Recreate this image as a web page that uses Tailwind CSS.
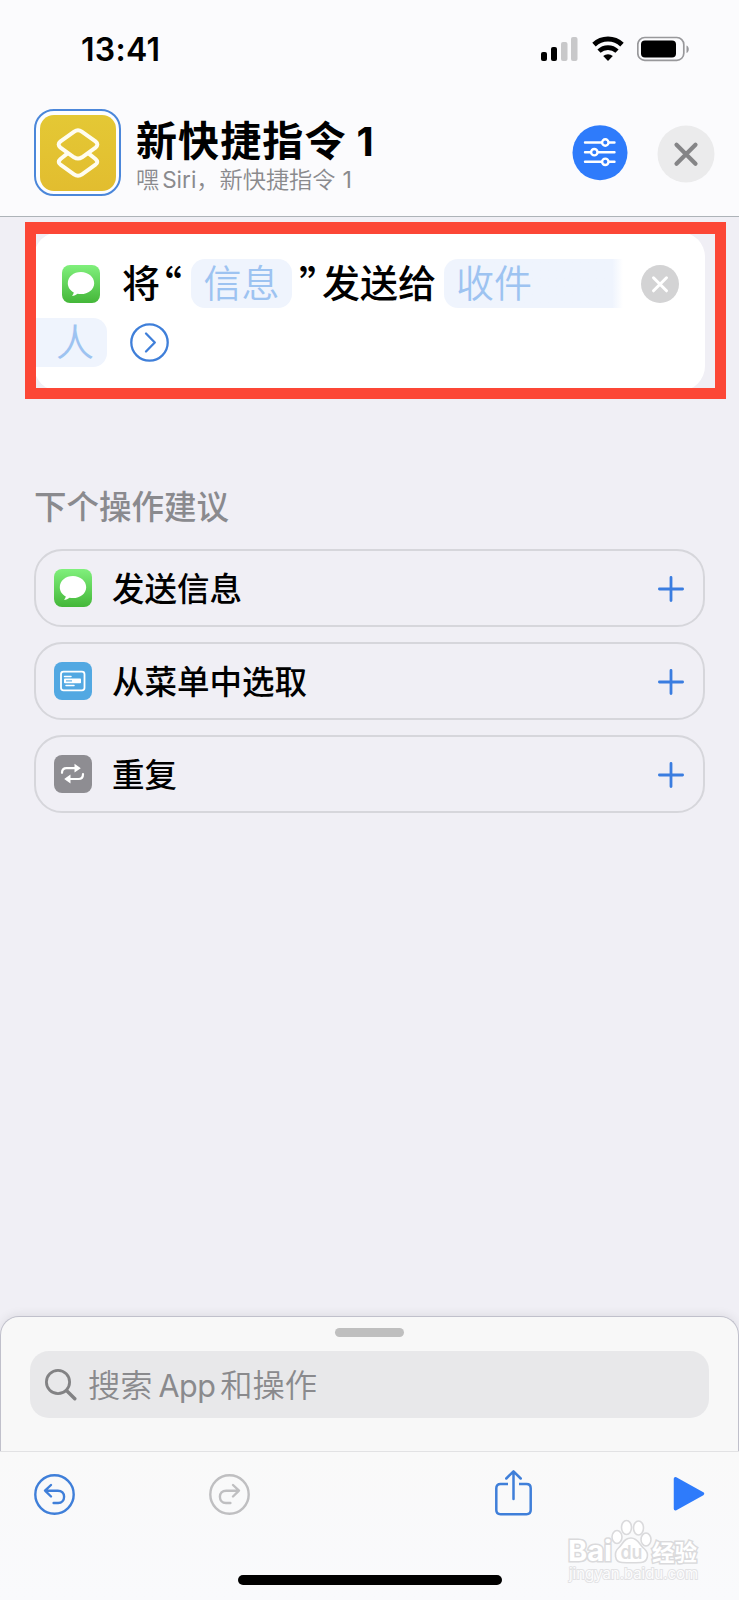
<!DOCTYPE html>
<html lang="zh-CN">
<head>
<meta charset="utf-8">
<title>新快捷指令 1</title>
<script src="https://cdn.jsdelivr.net/npm/@tailwindcss/browser@4"></script>
</head>
<body class="font-[Inter,'Noto_Sans_CJK_SC',sans-serif]">
<svg class="absolute size-0">
  <defs>
    <linearGradient id="green" x1="0" y1="0" x2="0" y2="1"><stop offset="0" stop-color="#80f07c"/><stop offset="1" stop-color="#44b739"/></linearGradient>
    <symbol id="msg" viewBox="0 0 38 38">
      <rect width="38" height="38" rx="8" fill="url(#green)"/>
      <path d="M19 7C11.600 7 5.800 11.800 5.800 18.200c0 4 2.400 7.400 6 9.300-.2 1.200-.8 2.400-1.800 3.300 2.200-.1 4.100-.9 5.500-2.100 1.100.2 2.300.4 3.500.4 7.300 0 13.200-4.700 13.200-10.900S26.300 7 19 7z" fill="#fff"/>
    </symbol>
    <symbol id="plus" viewBox="0 0 26 26"><path d="M13 1.400v23.200M1.400 13h23.200" stroke="#3a7de0" stroke-width="2.800" stroke-linecap="round"/></symbol>
  </defs>
</svg>
<div class="w-[739px] h-[1600px] bg-[#f0eff5] flex flex-col overflow-hidden text-black">

  <header class="h-[217px] shrink-0 bg-[#fbfbfd] border-b border-[#adb3b8]">
    <div class="h-[98px] flex items-start justify-between pl-[81px] pr-[49px]">
      <div class="mt-[30px] text-[32px] leading-[40px] font-semibold tracking-[0.3px]">13:41</div>
      <div class="mt-[36px] flex items-start">
        <svg width="37" height="26" viewBox="0 0 37 26"><rect x="0" y="16" width="6" height="9" rx="2"/><rect x="10" y="11" width="6" height="14" rx="2"/><rect x="20" y="6" width="6.500" height="19" rx="2" fill="#c8c8ca"/><rect x="30" y="1" width="6.500" height="24" rx="2" fill="#c8c8ca"/></svg>
        <svg class="ml-[14px]" width="32" height="26" viewBox="0 0 32 26" fill="none" stroke="#000"><path d="M2 8.600a20.300 20.300 0 0 1 28 0" stroke-width="5"/><path d="M7 15.200a13 13 0 0 1 18 0" stroke-width="4.600"/><path d="M16 25l-4.800-4.900a7 7 0 0 1 9.600 0z" fill="#000" stroke="none"/></svg>
        <svg class="ml-[13px]" width="53" height="26" viewBox="0 0 53 26"><rect x=".8" y="1.500" width="46" height="22.800" rx="7" fill="none" stroke="#98989b" stroke-width="1.700"/><rect x="4" y="4.500" width="35" height="17" rx="4"/><path d="M49.500 9.500c3 1 3 6.500 0 7.500z" fill="#98989b"/></svg>
      </div>
    </div>
    <div class="flex items-start pl-[34px] pr-[24px]">
      <div class="mt-[11px] size-[87px] rounded-[20px] border-2 border-[#4b87da] bg-[#fdfeff] flex items-center justify-center">
        <div class="size-[76px] rounded-[14px] bg-linear-to-b from-[#e4c835] to-[#e2bd2f] flex items-center justify-center">
          <svg width="44" height="50" viewBox="0 0 44 50" fill="none" stroke="#fffdf0" stroke-width="4" stroke-linejoin="round">
            <path d="M11.500 25.400 4.500 31Q1 34.200 4.500 36.600L18 46.400Q22 49.200 26 46.400L39.500 36.600Q43 34.200 39.500 31L32.500 25.400"/>
            <path d="M18.200 3.600Q22 1 25.800 3.600L39.500 13.400Q43.200 16.500 39.500 19.600L26 29.300Q22 31.800 18 29.300L4.500 19.600Q.8 16.500 4.500 13.400Z"/>
          </svg>
        </div>
      </div>
      <div class="ml-[15px] mt-[17px] flex-1 whitespace-nowrap">
        <div class="text-[41px] leading-[52px] font-bold tracking-[1.100px]">新快捷指令<span class="text-[40px] font-bold ml-[10px]">1</span></div>
        <div class="-mt-[2px] text-[23.200px] leading-[28px] text-[#8a8a8d] font-[350]">嘿<span class="ml-[3px] text-[22.500px] font-normal">Siri</span>，新快捷指令<span class="ml-[7px] font-normal">1</span></div>
      </div>
      <svg class="mt-[27px]" width="56" height="56" viewBox="0 0 56 56"><circle cx="28" cy="27.700" r="27.500" fill="#2e7bfb"/><g stroke="#fff" stroke-width="2.400" fill="#2e7bfb" stroke-linecap="round"><path d="M13 17.500h29.500M13 27.200h29.500M13 36.800h29.500"/><circle cx="33.300" cy="17.500" r="3.200"/><circle cx="22.300" cy="27.200" r="3.200"/><circle cx="33.300" cy="36.800" r="3.200"/></g></svg>
      <svg class="ml-[29px] mt-[27px]" width="58" height="58" viewBox="0 0 58 58"><circle cx="29" cy="29" r="28.500" fill="#ebebec"/><path d="M19.500 19.700l19 19M38.500 19.700l-19 19" stroke="#858587" stroke-width="4.200" stroke-linecap="round"/></svg>
    </div>
  </header>

  <section class="relative h-[183px] shrink-0 pt-[15px] pl-[34px] pr-[34px]">
    <div class="h-[159px] rounded-[25px] bg-white overflow-hidden">
      <div class="h-[76px] pt-[27px] flex items-center text-[38px] leading-[49px] font-medium whitespace-nowrap">
        <svg class="ml-[28px]" width="38" height="38"><use href="#msg"/></svg>
        <span class="ml-[22px] w-[38px]">将</span>
        <span class="w-[31px] pr-[9px] flex justify-end text-[41px] font-['Noto_Sans_CJK_SC']">“</span>
        <span class="w-[101px] h-[49px] rounded-[14px] bg-[#eff4fd] text-[#9dc3f1] font-[350] text-center">信息</span>
        <span class="w-[30px] pl-[7px] text-[41px] font-['Noto_Sans_CJK_SC']">”</span>
        <span class="w-[122px]">发送给</span>
        <span class="w-[179px] h-[49px] rounded-l-[14px] bg-linear-to-r from-[#eff4fd] from-94% to-white text-[#9dc3f1] font-[350] pl-[12px]">收件</span>
        <svg class="ml-[18px]" width="38" height="38" viewBox="0 0 38 38"><circle cx="19" cy="19" r="19" fill="#d3d3d4"/><path d="M12.500 12.800l13 13M25.500 12.800l-13 13" stroke="#fff" stroke-width="3" stroke-linecap="round"/></svg>
      </div>
      <div class="mt-[10px] flex items-center text-[38px] leading-[49px]">
        <span class="w-[73px] h-[49px] rounded-r-[14px] bg-[#eff4fd] text-[#9dc3f1] font-[350] pl-[22px]">人</span>
        <svg class="ml-[23px]" width="39" height="39" viewBox="0 0 39 39" fill="none" stroke="#3f7fd9" stroke-width="2.300" stroke-linecap="round" stroke-linejoin="round"><circle cx="19.500" cy="19.500" r="18.200"/><path d="M16 10.500l8.800 9-8.800 9"/></svg>
      </div>
    </div>
    <div class="absolute left-[25px] top-[5px] w-[701px] h-[177px] border-[11px] border-t-[12px] border-[#fc4736]"></div>
  </section>

  <main class="flex-1 px-[34px]">
    <h2 class="mt-[84px] h-[48px] text-[32.500px] leading-[48px] text-[#8a8a8e] font-medium">下个操作建议</h2>
    <ul class="mt-[17px] flex flex-col gap-[15px] text-[32.500px] leading-[48px] font-medium">
      <li class="h-[78px] border-2 border-[#d6d6db] rounded-[28px] flex items-center pl-[18px] pr-[19px]">
        <svg width="38" height="38"><use href="#msg"/></svg>
        <span class="ml-[20px] mt-[3px] flex-1">发送信息</span>
        <svg class="mt-px" width="26" height="26"><use href="#plus"/></svg>
      </li>
      <li class="h-[78px] border-2 border-[#d6d6db] rounded-[28px] flex items-center pl-[18px] pr-[19px]">
        <svg width="38" height="38" viewBox="0 0 38 38"><rect width="38" height="38" rx="8" fill="#52a8e2"/><rect x="7" y="9.700" width="23.500" height="18.600" rx="2.500" fill="none" stroke="#fff" stroke-width="1.800"/><path d="M10.500 14.400h6.500M12 23.400h8" stroke="#fff" stroke-width="1.500" stroke-linecap="round"/><rect x="10" y="16.500" width="17" height="4.800" rx=".8" fill="#fff"/><path d="M12 18.900h6" stroke="#52a8e2" stroke-width="1.100"/></svg>
        <span class="ml-[20px] mt-[3px] flex-1">从菜单中选取</span>
        <svg class="mt-px" width="26" height="26"><use href="#plus"/></svg>
      </li>
      <li class="h-[78px] border-2 border-[#d6d6db] rounded-[28px] flex items-center pl-[18px] pr-[19px]">
        <svg width="38" height="38" viewBox="0 0 38 38"><rect width="38" height="38" rx="8" fill="#8e8d92"/><path d="M8 17.800c0-3 1.600-4.600 4.500-4.600h9M29 19.200c0 3-1.600 4.800-4.500 4.800h-9" fill="none" stroke="#fff" stroke-width="2.200" stroke-linecap="round"/><path d="M20.500 8.800v8.800l6.300-4.400zM16.500 19.600v8.800l-6.300-4.400z" fill="#fff"/></svg>
        <span class="ml-[20px] mt-[3px] flex-1">重复</span>
        <svg class="mt-px" width="26" height="26"><use href="#plus"/></svg>
      </li>
    </ul>
  </main>

  <section class="h-[135px] shrink-0 rounded-t-[19px] border border-b-0 border-[#c0c0cb] bg-[#f8f8f8] shadow-[0_-2px_10px_rgba(0,0,0,0.07)] px-[29px] pt-[11px]">
    <div class="mx-auto w-[69px] h-[9px] rounded-full bg-[#bfbfbf]"></div>
    <div class="mt-[14px] h-[67px] rounded-[19px] bg-[#e8e8ea] flex items-center pl-[15px] text-[32.300px] text-[#8a8a8d] font-[350] whitespace-nowrap">
      <svg width="32" height="32" viewBox="0 0 32 32" fill="none" stroke="#828284" stroke-width="2.800" stroke-linecap="round"><circle cx="13" cy="13" r="11.600"/><path d="M21.500 21.500l8.300 8.300" stroke-width="3.400"/></svg>
      <span class="ml-[11px] mt-[2px] leading-[48px]">搜索<span class="ml-[6px] mr-[5px] text-[30.500px] tracking-[-0.6px] font-normal">App</span>和操作</span>
    </div>
  </section>

  <footer class="h-[149px] shrink-0 border-t border-[#e2e2e4] bg-linear-to-b from-[#f9f9f9] to-[#f9fafc] relative">
    <div class="flex items-start pl-[34px] pt-[22px]">
      <svg width="41" height="41" viewBox="0 0 41 41" fill="none" stroke="#3f7fd9" stroke-width="2.400" stroke-linecap="round" stroke-linejoin="round"><circle cx="20.500" cy="20.500" r="19.200"/><path d="M17 11l-6 5.700 6 5.800M11.300 16.700h12.500c4 0 6.300 2.700 6.300 6s-2.300 6.300-6 6.300h-4.500"/></svg>
      <svg class="ml-[134px]" width="41" height="41" viewBox="0 0 41 41" fill="none" stroke="#bfbfc1" stroke-width="2.400" stroke-linecap="round" stroke-linejoin="round"><circle cx="20.500" cy="20.500" r="19.200"/><path d="M24 11l6 5.700-6 5.800M29.700 16.700H17.200c-4 0-6.300 2.700-6.300 6s2.300 6.300 6 6.300h4.500"/></svg>
      <svg class="ml-[244px] -mt-[5px]" width="38" height="47" viewBox="0 0 38 47" fill="none" stroke="#3f7fd9" stroke-width="2.500" stroke-linecap="round" stroke-linejoin="round"><path d="M14 15H6.500Q2.300 15 2.300 19.200V41Q2.300 45.200 6.500 45.200H32.500Q36.700 45.200 36.700 41V19.200Q36.700 15 32.500 15H25" stroke-linecap="butt"/><path d="M19.500 30V2.500M12.300 9.500l7.200-7.200 7.200 7.200"/></svg>
      <svg class="ml-[141px] mt-[2px]" width="32" height="36" viewBox="0 0 32 36"><path d="M2.500 2.800v30L29.500 17.700z" fill="#2e7bfb" stroke="#2e7bfb" stroke-width="3.500" stroke-linejoin="round"/></svg>
    </div>
    <div class="absolute left-[238px] top-[123px] w-[264px] h-[10px] rounded-full bg-black"></div>
    <svg class="absolute left-[560px] top-[63px]" width="150" height="75" viewBox="0 0 150 75" fill="#fff" stroke="#dadadc" stroke-width="1.600">
      <g paint-order="stroke" font-family="Inter, 'Noto Sans CJK SC', sans-serif" stroke-width="3">
        <text x="8" y="46" font-size="28" font-weight="700" textLength="44" lengthAdjust="spacingAndGlyphs">Bai</text>
        <text x="92" y="46" font-size="23" font-weight="700" textLength="45" lengthAdjust="spacingAndGlyphs">经验</text>
        <text x="9" y="64" font-size="15" stroke-width="1.800" stroke="#e2e2e4" fill="#fcfcfd" textLength="129" lengthAdjust="spacingAndGlyphs">jingyan.baidu.com</text>
      </g>
      <ellipse cx="57" cy="22" rx="5" ry="6.500"/><ellipse cx="66.500" cy="12.500" rx="5" ry="7"/><ellipse cx="78.500" cy="13" rx="5" ry="7"/><ellipse cx="86" cy="24.500" rx="5" ry="6.500"/>
      <path d="M71 23c-7 0-8 6-12.500 10C54 37 54 47 62 47.500c4 .3 14 .3 19 0 7-.5 8.500-9 3.500-13.500C79.500 30 78 23 71 23z"/>
      <text x="60.500" y="43.500" font-size="19" font-weight="600" fill="#dededf" stroke="none" font-family="Inter" textLength="22" lengthAdjust="spacingAndGlyphs">du</text>
    </svg>
  </footer>
</div>
</body>
</html>
